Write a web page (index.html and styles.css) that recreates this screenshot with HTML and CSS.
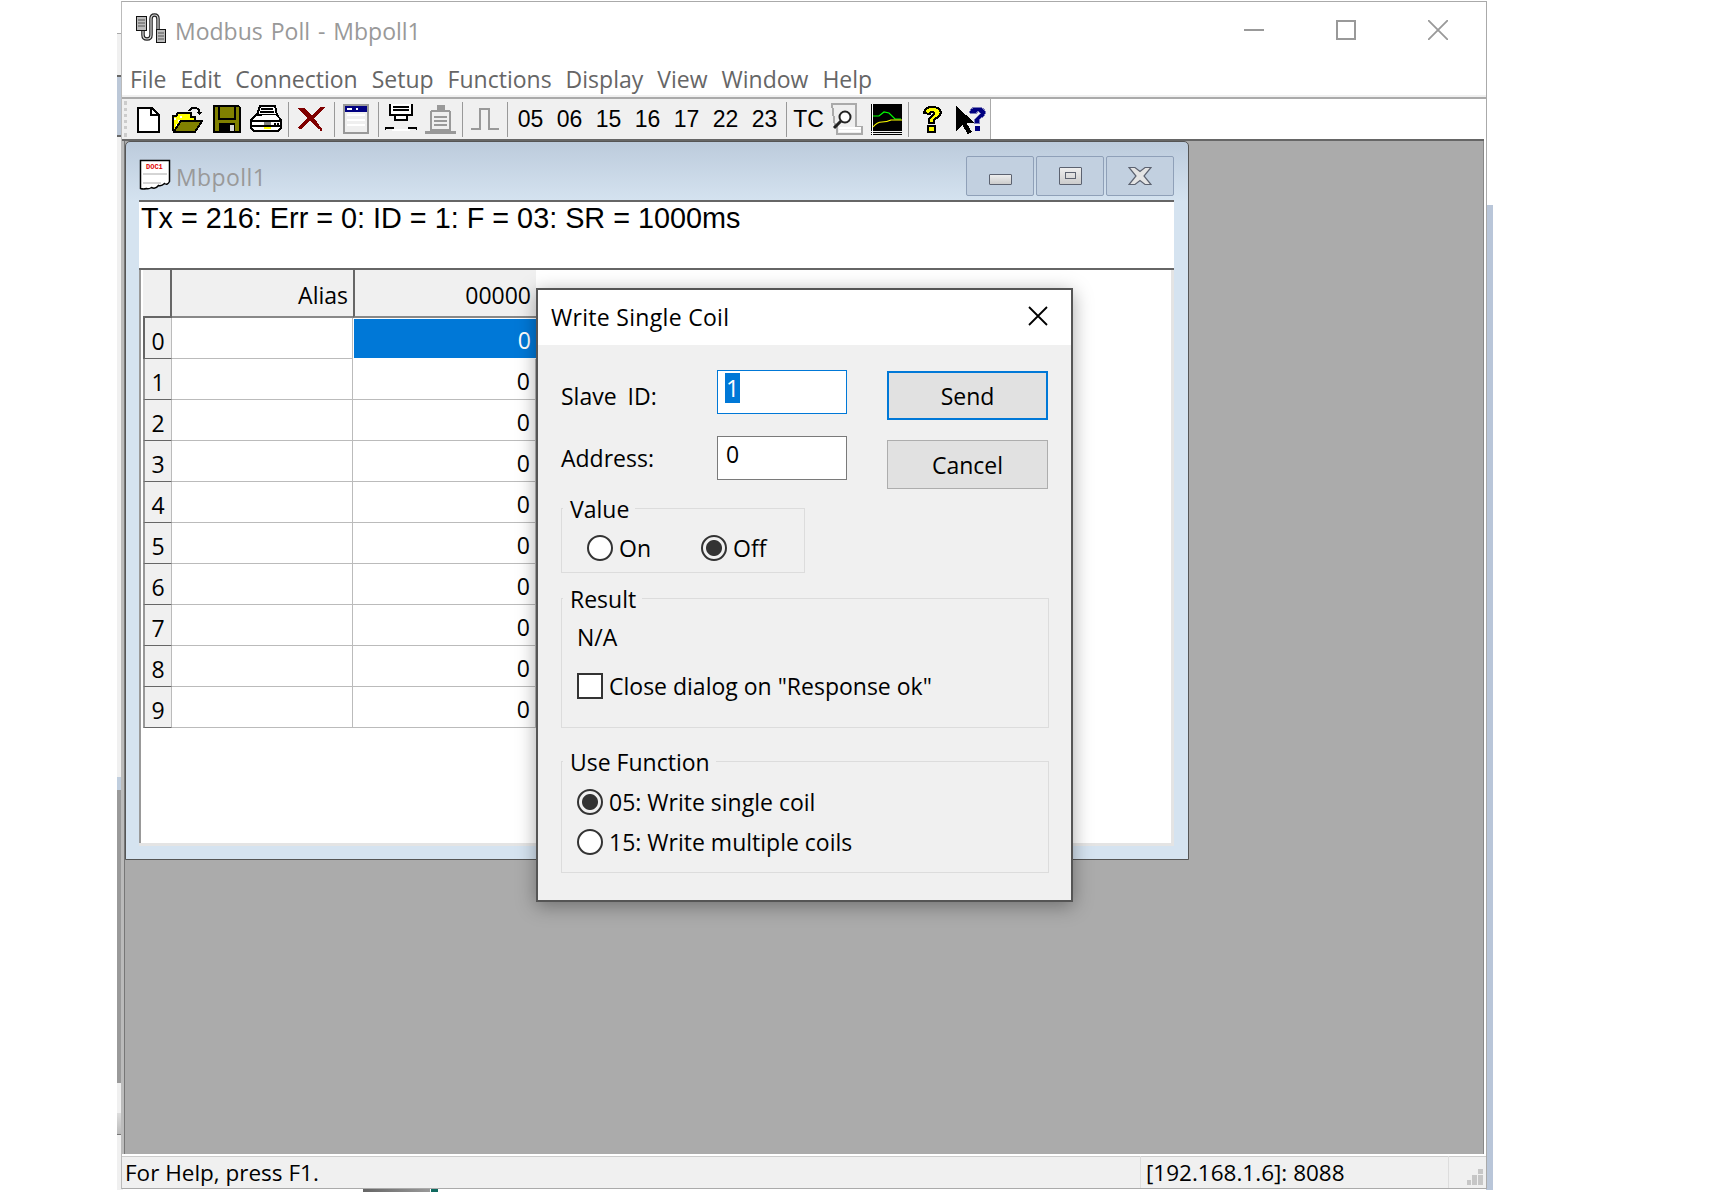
FILE: index.html
```html
<!DOCTYPE html>
<html lang="en">
<head>
    <meta charset="UTF-8">
    <title>Modbus Poll - Mbpoll1</title>
    <link rel="stylesheet" href="styles.css">
</head>
<body>
    <!-- bits of the windows behind, showing round the edge of the capture -->
    <div class="behind behind-base"></div>
    <div class="behind behind-left-a"></div>
    <div class="behind behind-left-b"></div>
    <div class="behind behind-left-c"></div>
    <div class="behind behind-left-d"></div>
    <div class="behind behind-right"></div>
    <div class="behind behind-bottom-a"></div>
    <div class="behind behind-bottom-b"></div>

    <div class="app">
        <div class="titlebar">
            <svg class="app-icon" width="32" height="30" viewBox="0 0 32 30">
                <path d="M8 17v5q0 4 4 4t4-4V6q0-4 3.500-4t3.500 4v10" fill="none" stroke="#222" stroke-width="3.500"/>
                <path d="M8 17v5q0 4 4 4t4-4V6q0-4 3.500-4t3.500 4v10" fill="none" stroke="#ddd" stroke-width="1.200"/>
                <rect x="1.500" y="3.500" width="10" height="14" fill="#bbb" stroke="#111"/>
                <path d="M3 7h7M3 10h7M3 13h7" stroke="#555"/>
                <rect x="21.500" y="16.500" width="9" height="13" fill="#bbb" stroke="#111"/>
                <path d="M23 20h6M23 23h6M23 26h6" stroke="#555"/>
            </svg>
            <span class="app-title">Modbus Poll - Mbpoll1</span>
            <div class="caption-buttons">
                <svg width="20" height="20" viewBox="0 0 20 20"><path d="M0 10h20" stroke="#999" stroke-width="2"/></svg>
                <svg width="20" height="20" viewBox="0 0 20 20"><rect x="1" y="1" width="18" height="18" fill="none" stroke="#999" stroke-width="2"/></svg>
                <svg width="20" height="20" viewBox="0 0 20 20"><path d="M0 0l20 20M20 0L0 20" stroke="#999" stroke-width="1.800"/></svg>
            </div>
        </div>

        <div class="menubar">
            <span>File</span><span>Edit</span><span>Connection</span><span>Setup</span><span>Functions</span><span>Display</span><span>View</span><span>Window</span><span>Help</span>
        </div>

        <div class="toolbar-row">
            <div class="toolbar">
                <i class="grip"></i>
                <svg class="tool t-new" width="24" height="27" viewBox="0 0 24 27" shape-rendering="crispEdges">
                    <path d="M1.500 1.500h14l7 7v17h-21z" fill="#fff" stroke="#000" stroke-width="2"/>
                    <path d="M15 1v8h8" fill="none" stroke="#000" stroke-width="2"/>
                </svg>
                <svg class="tool t-open" width="31" height="27" viewBox="0 0 31 27" shape-rendering="crispEdges">
                    <path d="M1 11h3l2-3h12v4h5v4H8l-6 9z" fill="#ff0"/>
                    <path d="M2 12h2v2H2zM6 14h2v2H6zM4 18h2v2H4zM8 10h2v2H8z" fill="#fff"/>
                    <path d="M10 12h10v2H10z" fill="#ff0"/>
                    <path d="M1 25V10h3l2-3h13v4h4v5" fill="none" stroke="#000" stroke-width="2"/>
                    <path d="M2 25l7-10h21l-7 11H2z" fill="#808000" stroke="#000" stroke-width="2"/>
                    <path d="M17 5q3-4 7-3t3 5" fill="none" stroke="#000" stroke-width="2"/>
                    <path d="M24 6h6l-3 3z" fill="#000"/>
                </svg>
                <svg class="tool t-save" width="28" height="28" viewBox="0 0 28 28" shape-rendering="crispEdges">
                    <path d="M0 0h25l3 3v25H0z" fill="#000"/>
                    <rect x="2" y="2" width="24" height="24" fill="#808000"/>
                    <rect x="6" y="1" width="16" height="13" fill="#808000" stroke="#000" stroke-width="2"/>
                    <rect x="6" y="18" width="16" height="10" fill="#000"/>
                    <rect x="17" y="20" width="4" height="6" fill="#d8d8d8"/>
                </svg>
                <svg class="tool t-print" width="32" height="28" viewBox="0 0 32 28" shape-rendering="crispEdges">
                    <path d="M10 1h15l2 9H7z" fill="#fff" stroke="#000" stroke-width="2"/>
                    <path d="M11 4h12M10 7h14" stroke="#000" stroke-width="1.500"/>
                    <path d="M6 10h21l4 5v8l-3 3H4l-3-3v-8z" fill="#fff" stroke="#000" stroke-width="2"/>
                    <path d="M2 16h29M2 21h29" stroke="#000" stroke-width="2"/>
                    <path d="M27 18h2v2h-2zM24 18h2v2h-2z" fill="#000"/>
                    <rect x="14" y="17" width="7" height="3" fill="#808080"/>
                    <rect x="14" y="22" width="7" height="2" fill="#ff0"/>
                    <rect x="12" y="10" width="14" height="2" fill="#fff"/>
                </svg>
                <i class="sep"></i>
                <svg class="tool t-del" width="30" height="26" viewBox="0 0 30 26" shape-rendering="crispEdges">
                    <path d="M2 2l6 0 8 7 8-8 5 0-11 11 8 11-4 0-8-9-9 9-4-1 10-10z" fill="#800000"/>
                    <rect x="24" y="23" width="2" height="2" fill="#800000"/>
                </svg>
                <i class="sep"></i>
                <svg class="tool t-win" width="26" height="30" viewBox="0 0 26 30" shape-rendering="crispEdges">
                    <rect x="1" y="1" width="24" height="28" fill="#efefef" stroke="#999" stroke-width="2"/>
                    <rect x="2" y="2" width="22" height="6" fill="#000080"/>
                    <path d="M4 4h5v2H4zM13 4h2v2h-2z" fill="#fff"/>
                    <path d="M4 11h18M4 16h18M4 21h18" stroke="#fff" stroke-width="2"/>
                </svg>
                <i class="sep"></i>
                <svg class="tool t-conn" width="32" height="30" viewBox="0 0 32 30" shape-rendering="crispEdges">
                    <path d="M5 0v11h22V0" fill="#fff" stroke="#000" stroke-width="2"/>
                    <path d="M8 3h16M8 6h16" stroke="#000" stroke-width="2"/>
                    <path d="M10 11h12v5H10z" fill="#fff" stroke="#000" stroke-width="2"/>
                    <path d="M0 26v-2h8v2M24 26v-2h8v2" fill="none" stroke="#000" stroke-width="2"/>
                    <rect x="7" y="25" width="18" height="2" fill="#fff"/>
                </svg>
                <svg class="tool t-disc" width="31" height="30" viewBox="0 0 31 30" shape-rendering="crispEdges">
                    <rect x="12" y="1" width="8" height="6" fill="#999"/>
                    <path d="M6 9q0-2 2-2h15q2 0 2 2v17H6z" fill="#efefef" stroke="#999" stroke-width="2"/>
                    <path d="M9 13h13M9 17h13M9 21h13" stroke="#999" stroke-width="2"/>
                    <path d="M0 28h31" stroke="#999" stroke-width="3"/>
                </svg>
                <i class="sep"></i>
                <svg class="tool t-pulse" width="28" height="22" viewBox="0 0 28 22" shape-rendering="crispEdges">
                    <path d="M0 21h9V1h9v20h10" fill="none" stroke="#999" stroke-width="2"/>
                </svg>
                <i class="sep"></i>
                <span class="fn f-05">05</span><span class="fn">06</span><span class="fn">15</span><span class="fn">16</span><span class="fn">17</span><span class="fn">22</span><span class="fn">23</span>
                <i class="sep sep-fn"></i>
                <span class="fn fn-tc">TC</span>
                <svg class="tool t-scope" width="32" height="32" viewBox="0 0 32 32" shape-rendering="crispEdges">
                    <path d="M1 1h24v23h6v7H6v-7H4z" fill="#efefef" stroke="#aaa" stroke-width="2"/>
                    <path d="M8 25h22M8 28h22" stroke="#fff" stroke-width="2"/>
                    <circle cx="14" cy="14" r="5.500" fill="#fff" stroke="#222" stroke-width="2" shape-rendering="auto"/>
                    <path d="M10 18l-7 7" stroke="#222" stroke-width="3" shape-rendering="auto"/>
                </svg>
                <svg class="tool t-chart" width="31" height="31" viewBox="0 0 31 31">
                    <rect width="31" height="27" fill="#000"/>
                    <rect y="28" width="31" height="1" fill="#000"/>
                    <rect y="30" width="31" height="1" fill="#000"/>
                    <rect x="1" y="0" width="1" height="31" fill="#fff"/>
                    <path d="M2 12h6l5-4 5 1 6 6h6" fill="none" stroke="#0f0" stroke-width="1.200"/>
                    <path d="M2 23q4-5 9-5t9-2h11" fill="none" stroke="#ff0" stroke-width="1.200"/>
                </svg>
                <i class="sep"></i>
                <svg class="tool t-help" width="22" height="28" viewBox="0 0 20 28" preserveAspectRatio="none" shape-rendering="crispEdges">
                    <path d="M3 8q0-6 7-6t8 5q0 4-4 6l-2 2v3H7v-4l4-4q2-2 0-3-2-1-3 2z" fill="#ff0" stroke="#000" stroke-width="2"/>
                    <rect x="6" y="21" width="7" height="6" fill="#ff0" stroke="#000" stroke-width="2"/>
                </svg>
                <svg class="tool t-what" width="31" height="29" viewBox="0 0 29.500 29" preserveAspectRatio="none" shape-rendering="crispEdges">
                    <path d="M1 1v25l6-6 5 9 4-2-5-9h8z" fill="#000"/>
                    <path d="M14 8q0-6 7-6t8 5q0 4-4 6l-2 2v3h-4v-4l4-4q2-2 0-3-2-1-3 2z" fill="#000080" stroke="#7a7ab8"/>
                    <rect x="19" y="21" width="5" height="5" fill="#000080"/>
                </svg>
            </div>
        </div>

        <div class="mdi-area">
            <div class="child">
                <div class="child-title">
                    <svg class="doc-icon" width="32" height="32" viewBox="0 0 32 32">
                        <path d="M1.500 1.500h29v21q-2 4-5 2-3 3-6 2-3 4-7 2-3 2-5 1-3 1-6 0z" fill="#fff" stroke="#000" stroke-width="1.500"/>
                        <path d="M4 15h24M4 24h18" stroke="#aaa"/>
                        <text x="7" y="10" class="doc-label">DOC1</text>
                    </svg>
                    <span class="child-name">Mbpoll1</span>
                    <div class="child-buttons">
                        <div class="child-btn"><i class="glyph-min"></i></div>
                        <div class="child-btn"><i class="glyph-max"><b></b></i></div>
                        <div class="child-btn">
                            <svg width="24" height="20" viewBox="0 0 24 20">
                                <path d="M1 1.500h6l5 4 5-4h6l-7 8.500 7 8.500h-6l-5-4-5 4H1l7-8.500z" fill="#e4e4e4" stroke="#5c6270" stroke-width="1.200"/>
                            </svg>
                        </div>
                    </div>
                </div>
                <div class="child-body">
                    <div class="status-line">Tx = 216: Err = 0: ID = 1: F = 03: SR = 1000ms</div>
                    <div class="sheet">
                        <div class="grid">
                            <div class="corner"></div>
                            <div class="col-head">Alias</div>
                            <div class="col-head col-head-on">00000</div>

                            <div class="row-head row-head-on">0</div><div class="cell"></div><div class="cell cell-val cell-sel">0</div>
                            <div class="row-head">1</div><div class="cell"></div><div class="cell cell-val">0</div>
                            <div class="row-head">2</div><div class="cell"></div><div class="cell cell-val">0</div>
                            <div class="row-head">3</div><div class="cell"></div><div class="cell cell-val">0</div>
                            <div class="row-head">4</div><div class="cell"></div><div class="cell cell-val">0</div>
                            <div class="row-head">5</div><div class="cell"></div><div class="cell cell-val">0</div>
                            <div class="row-head">6</div><div class="cell"></div><div class="cell cell-val">0</div>
                            <div class="row-head">7</div><div class="cell"></div><div class="cell cell-val">0</div>
                            <div class="row-head">8</div><div class="cell"></div><div class="cell cell-val">0</div>
                            <div class="row-head">9</div><div class="cell"></div><div class="cell cell-val">0</div>
                        </div>
                    </div>
                </div>
            </div>
        </div>

        <div class="statusbar">
            <div class="status-help">For Help, press F1.</div>
            <div class="status-conn">[192.168.1.6]: 8088</div>
            <div class="status-grip">
                <svg width="16" height="16" viewBox="0 0 16 16">
                    <path d="M11 0h5v5h-5zM5 6h5v5H5zM11 6h5v5h-5zM0 11h4v5H0zM5 11h5v5H5zM11 11h5v5h-5z" fill="#c6c6c6"/>
                </svg>
            </div>
        </div>
    </div>

    <div class="dialog">
        <div class="dialog-title">
            <span>Write Single Coil</span>
            <svg width="20" height="20" viewBox="0 0 20 20"><path d="M1 1l18 18M19 1L1 19" stroke="#000" stroke-width="1.800"/></svg>
        </div>
        <div class="dialog-body">
            <div class="top-row">
                <div class="fields">
                    <div class="field">
                        <label class="label-slave">Slave ID:</label>
                        <div class="edit edit-focus"><span class="selected">1</span></div>
                    </div>
                    <div class="field">
                        <label>Address:</label>
                        <div class="edit">0</div>
                    </div>
                </div>
                <div class="actions">
                    <div class="btn btn-default">Send</div>
                    <div class="btn">Cancel</div>
                </div>
            </div>

            <div class="group group-value">
                <div class="legend">Value</div>
                <div class="value-row">
                    <div class="opt opt-on"><i class="radio"></i>On</div>
                    <div class="opt"><i class="radio radio-on"></i>Off</div>
                </div>
            </div>

            <div class="group group-result">
                <div class="legend">Result</div>
                <div class="result-text">N/A</div>
                <div class="opt opt-close"><i class="check"></i>Close dialog on "Response ok"</div>
            </div>

            <div class="group group-func">
                <div class="legend">Use Function</div>
                <div class="opt"><i class="radio radio-on"></i>05: Write single coil</div>
                <div class="opt"><i class="radio"></i>15: Write multiple coils</div>
            </div>
        </div>
    </div>
</body>
</html>
```

FILE: styles.css
```css
* {
    box-sizing: border-box;
}
html, body {
    margin: 0;
    height: 100%;
}
body {
    position: relative;
    width: 1728px;
    height: 1195px;
    overflow: hidden;
    background-color: #fff;
    font-family: "Open Sans", "Noto Sans", sans-serif;
    color: #000;
}

/* windows behind */
.behind {
    position: absolute;
}
.behind-base {
    left: 117px;
    top: 33px;
    width: 6px;
    height: 1157px;
    background-color: #f0f0f0;
    border-top: 1px solid #aaa;
}
.behind-left-a {
    left: 117px;
    top: 75px;
    width: 6px;
    height: 62px;
    background-color: #bcc8d8;
    border-top: 2px solid #666;
    border-bottom: 2px solid #666;
}
.behind-left-b {
    left: 117px;
    top: 777px;
    width: 6px;
    height: 13px;
    background-color: #c0cede;
}
.behind-left-c {
    left: 117px;
    top: 790px;
    width: 6px;
    height: 293px;
    background-color: #9a9a9a;
}
.behind-left-d {
    left: 117px;
    top: 1113px;
    width: 6px;
    height: 22px;
    background: linear-gradient(to bottom, #ddd, #bbb);
    border-bottom: 1px solid #777;
}
.behind-right {
    left: 1486px;
    top: 205px;
    width: 7px;
    height: 985px;
    background-color: #b9c6d9;
}
.behind-bottom-a {
    left: 363px;
    top: 1188px;
    width: 67px;
    height: 4px;
    background: linear-gradient(to right, #666, #999);
}
.behind-bottom-b {
    left: 431px;
    top: 1188px;
    width: 7px;
    height: 4px;
    background-color: #106a60;
}

/* main window */
.app {
    position: absolute;
    left: 121px;
    top: 1px;
    width: 1366px;
    height: 1188px;
    display: flex;
    flex-direction: column;
    background-color: #fff;
    border: 1px solid #aaa;
    border-left-color: #bbb;
}
.titlebar {
    height: 58px;
    flex: none;
    display: flex;
    align-items: center;
    padding-left: 13px;
}
.app-icon {
    margin-right: 8px;
    margin-top: -6px;
}
.app-title {
    font-size: 23px;
    word-spacing: 2px;
    color: #999;
}
.caption-buttons {
    margin-left: auto;
    margin-right: 38px;
    margin-top: -2px;
    display: flex;
    gap: 72px;
}
.caption-buttons svg {
    display: block;
}
.menubar {
    height: 39px;
    flex: none;
    display: flex;
    gap: 14px;
    padding-left: 8px;
    font-size: 23px;
    line-height: 39px;
    color: #666;
    border-bottom: 2px solid #aaa;
    box-shadow: inset 0 -2px 0 #f0f0f0;
}
.toolbar-row {
    height: 42px;
    flex: none;
    margin-right: 2px;
    border-bottom: 2px solid #666;
}
.toolbar {
    width: 869px;
    height: 40px;
    display: flex;
    align-items: center;
    background-color: #f0f0f0;
    border-right: 1px solid #aaa;
    padding-left: 2px;
}
.toolbar svg {
    display: block;
    flex: none;
}
.grip {
    width: 3px;
    height: 36px;
    flex: none;
    margin-right: 9px;
    border-left: 3px dotted #ccc;
}
.sep {
    width: 1px;
    height: 35px;
    flex: none;
    background-color: #999;
}
.t-open { margin-left: 12px; }
.t-save { margin-left: 10px; }
.t-print { margin-left: 9px; }
.toolbar .t-print + .sep { margin-left: 6px; }
.t-del { margin-left: 7px; margin-right: 8px; }
.t-win { margin-left: 8px; margin-right: 9px; }
.t-conn { margin-left: 6px; }
.t-disc { margin-left: 8px; margin-right: 6px; }
.t-pulse { margin-left: 8px; margin-right: 8px; }
.fn {
    width: 39px;
    flex: none;
    text-align: center;
    font-family: "Liberation Sans", Arial, sans-serif;
    font-size: 23px;
}
.f-05 { margin-left: 3px; }
.sep-fn { margin-left: 2px; }
.fn-tc {
    width: 37px;
    margin-left: 3px;
}
.t-scope { margin-left: 4px; }
.t-chart { margin-left: 8px; margin-right: 6px; }
.t-help { margin-left: 12px; }
.t-what { margin-left: 12px; }

/* mdi */
.mdi-area {
    flex: 1;
    position: relative;
    margin-left: 2px;
    margin-right: 2px;
    background-color: #ababab;
    border-left: 1px solid #777;
    border-right: 1px solid #888;
    box-shadow: -2px 0 0 #bbb;
}
.child {
    position: absolute;
    left: 0;
    top: 0;
    width: 1064px;
    height: 719px;
    display: flex;
    flex-direction: column;
    background: linear-gradient(to bottom, #bccbdc 0, #d5e3f0 60px);
    border: 1px solid #555;
    border-radius: 5px 5px 0 0;
    padding: 0 14px 13px 13px;
}
.child-title {
    height: 58px;
    flex: none;
    display: flex;
    align-items: center;
}
.doc-icon {
    margin-right: 5px;
    margin-top: 7px;
}
.doc-label {
    font-family: "Liberation Mono", monospace;
    font-size: 7px;
    font-weight: bold;
    fill: #e00000;
}
.child-name {
    font-size: 23px;
    letter-spacing: 0.4px;
    color: #999;
    margin-top: 11px;
}
.child-buttons {
    margin-left: auto;
    margin-top: 9px;
    display: flex;
    gap: 2px;
}
.child-btn {
    width: 68px;
    height: 40px;
    display: flex;
    align-items: center;
    justify-content: center;
    border: 1px solid #8fa0b8;
    border-radius: 2px;
    background-color: #c2d0e0;
}
.glyph-min {
    width: 23px;
    height: 11px;
    margin-top: 8px;
    background: linear-gradient(to bottom, #eee, #ccc);
    border: 1px solid #5c6270;
    border-radius: 1px;
}
.glyph-max {
    width: 23px;
    height: 18px;
    display: flex;
    align-items: center;
    justify-content: center;
    background: linear-gradient(to bottom, #eee, #ccc);
    border: 1px solid #5c6270;
    border-radius: 1px;
}
.glyph-max b {
    width: 11px;
    height: 7px;
    border: 1px solid #5c6270;
}
.child-body {
    flex: 1;
    display: flex;
    flex-direction: column;
    background-color: #fff;
    border-top: 2px solid #666;
}
.status-line {
    height: 68px;
    flex: none;
    padding-left: 2px;
    font-family: "Liberation Sans", Arial, sans-serif;
    font-size: 28.800px;
    line-height: 33px;
    border-bottom: 2px solid #666;
    white-space: nowrap;
}
.sheet {
    flex: 1;
    padding-left: 4px;
    border-right: 3px solid #e4e4e4;
    border-bottom: 3px solid #e4e4e4;
    box-shadow: inset 2px 0 0 #999;
}

/* grid */
.grid {
    display: grid;
    grid-template-columns: 29px 181px 183px;
    grid-template-rows: 48px repeat(10, 41px);
    width: 393px;
    font-size: 23px;
}
.corner, .col-head, .row-head {
    background-color: #f0f0f0;
}
.corner {
    border-right: 2px solid #666;
    border-bottom: 2px solid #666;
}
.col-head {
    text-align: right;
    padding-right: 5px;
    line-height: 50px;
    border-bottom: 2px solid #888;
}
.col-head-on {
    border-left: 2px solid #666;
}
.row-head {
    text-align: center;
    line-height: 46px;
    border-bottom: 1px solid #666;
    border-right: 1px solid #bbb;
    border-left: 2px solid #999;
}
.row-head-on {
    border-left-color: #666;
}
.cell {
    border-right: 1px solid #bbb;
    border-bottom: 1px solid #bbb;
}
.cell-val {
    text-align: right;
    padding-right: 5px;
    line-height: 44px;
}
.cell-sel {
    background-color: #0078d7;
    color: #fff;
    margin: 1px 0 1px 1px;
    border: none;
    line-height: 42px;
}

/* dialog */
.dialog {
    position: absolute;
    left: 536px;
    top: 288px;
    width: 537px;
    height: 614px;
    display: flex;
    flex-direction: column;
    background-color: #f0f0f0;
    border: 2px solid #555;
    box-shadow: 0 4px 18px rgba(0, 0, 0, 0.35);
    font-size: 23px;
}
.dialog-title {
    height: 55px;
    flex: none;
    display: flex;
    align-items: center;
    justify-content: space-between;
    padding: 0 23px 2px 13px;
    letter-spacing: 0.3px;
    background-color: #fff;
}
.dialog-title svg {
    margin-top: -2px;
}
.dialog-body {
    flex: 1;
    padding: 25px 23px 0 23px;
    display: flex;
    flex-direction: column;
}
.top-row {
    display: flex;
    justify-content: space-between;
    height: 138px;
}
.fields {
    display: flex;
    flex-direction: column;
    gap: 22px;
}
.field {
    display: flex;
    align-items: center;
    height: 44px;
}
.field label {
    width: 156px;
}
.field .label-slave {
    margin-top: 8px;
    word-spacing: 5px;
}
.edit {
    width: 130px;
    height: 44px;
    padding-left: 8px;
    line-height: 34px;
    background-color: #fff;
    border: 1px solid #7a7a7a;
}
.edit-focus {
    border-color: #0078d7;
}
.selected {
    background-color: #0078d7;
    color: #fff;
    display: inline-block;
    height: 30px;
    line-height: 30px;
    margin-top: 2px;
    margin-left: -1px;
    padding: 0 1px;
    vertical-align: top;
}
.actions {
    display: flex;
    flex-direction: column;
    gap: 20px;
    padding-top: 1px;
}
.btn {
    width: 161px;
    height: 49px;
    display: flex;
    align-items: center;
    justify-content: center;
    background-color: #e1e1e1;
    border: 1px solid #adadad;
}
.btn-default {
    border: 2px solid #0078d7;
}
.group {
    position: relative;
    border: 1px solid #dcdcdc;
}
.legend {
    position: absolute;
    left: 1px;
    top: -16px;
    padding: 0 6px 0 7px;
    line-height: 32px;
    background-color: #f0f0f0;
}
.group-value {
    width: 244px;
    height: 65px;
}
.group-result {
    width: 488px;
    height: 130px;
    margin-top: 25px;
}
.group-func {
    width: 488px;
    height: 112px;
    margin-top: 33px;
    padding-top: 20px;
}
.value-row {
    display: flex;
    padding: 23px 0 0 25px;
}
.opt {
    display: flex;
    align-items: center;
    height: 40px;
    padding-left: 15px;
}
.value-row .opt {
    padding-left: 0;
    height: 32px;
}
.opt-on {
    width: 114px;
}
.radio {
    width: 26px;
    height: 26px;
    flex: none;
    margin-right: 6px;
    border: 2px solid #333;
    border-radius: 50%;
    background-color: #fff;
    position: relative;
}
.radio-on {
    background-color: #f0f0f0;
    background-image: radial-gradient(circle, #333 0, #333 7.500px, transparent 8.500px);
}
.check {
    width: 26px;
    height: 26px;
    flex: none;
    margin-right: 6px;
    background-color: #fff;
    border: 2px solid #333;
}
.result-text {
    padding: 22px 0 0 15px;
    line-height: 32px;
}
.opt-close {
    margin-top: 13px;
}

/* status bar */
.statusbar {
    height: 34px;
    flex: none;
    display: flex;
    background-color: #f0f0f0;
    font-size: 22.500px;
    line-height: 34px;
    border-top: 2px solid #fff;
    box-shadow: inset 0 1px 0 #ccc;
}
.status-help {
    width: 1018px;
    padding-left: 3px;
}
.status-conn {
    width: 308px;
    padding-left: 5px;
    border-left: 1px solid #ddd;
}
.status-grip {
    flex: 1;
    border-left: 1px solid #ddd;
    display: flex;
    align-items: flex-end;
    justify-content: flex-end;
    padding: 0 3px 3px 0;
}
```
